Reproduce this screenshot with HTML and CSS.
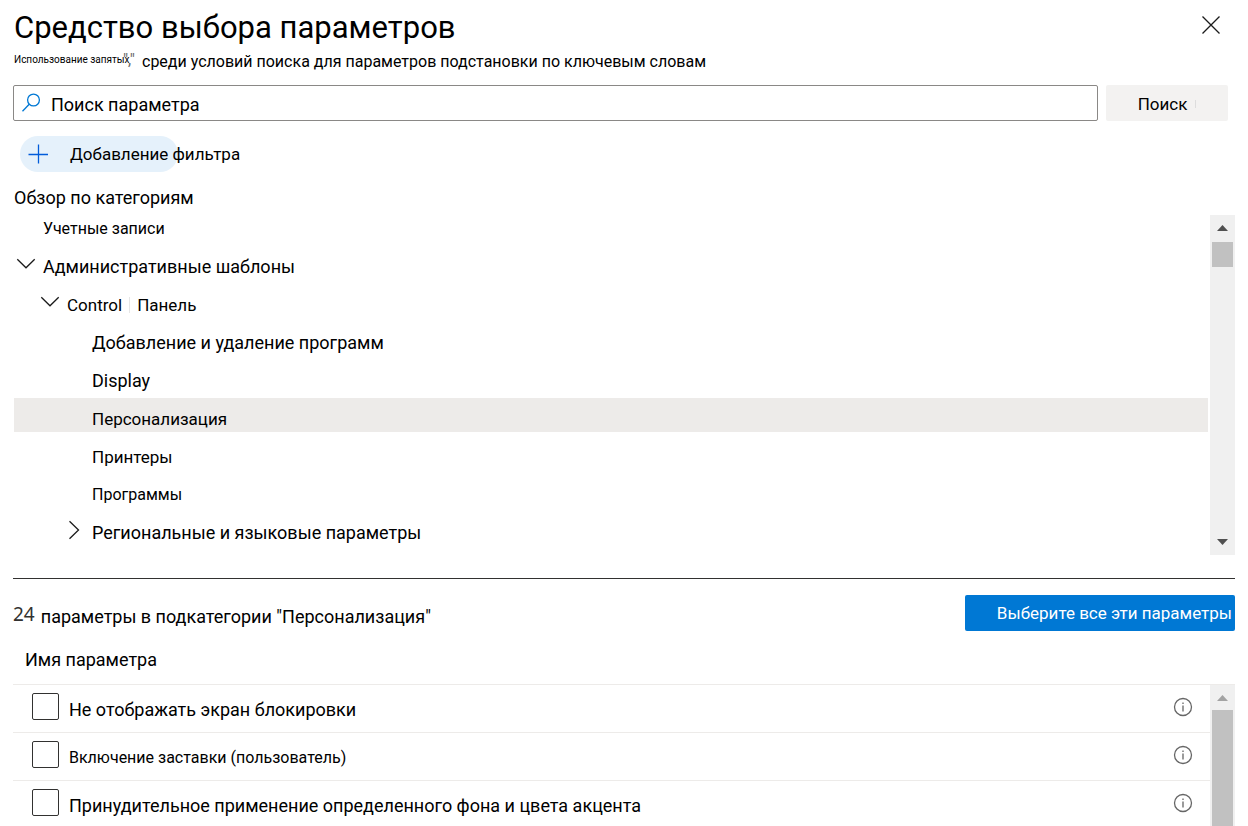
FILE: index.html
```html
<!DOCTYPE html>
<html lang="ru">
<head>
<meta charset="utf-8">
<title>Средство выбора параметров</title>
<link rel="stylesheet" href="styles.css">
</head>
<body>
<main class="picker">
  <header class="picker-head">
    <h1 class="title">Средство выбора параметров</h1>
    <button class="close" type="button" aria-label="Закрыть">
      <svg width="20" height="20" viewBox="0 0 20 20"><path d="M1.5 1.5l17 17M18.5 1.5l-17 17"/></svg>
    </button>
  </header>
  <p class="hint"><span class="hint-small">Использование запятых<span class="quote">","</span></span><span>среди условий поиска для параметров подстановки по ключевым словам</span></p>

  <form class="search">
    <label class="search-box">
      <svg class="search-icon" width="20" height="20" viewBox="0 0 20 20"><circle cx="11.500" cy="7" r="5.9"/><path d="M7.2 11.2L.5 18.2"/></svg>
      <input class="search-input" type="text" aria-label="Поиск параметра" placeholder="Поиск параметра">
    </label>
    <button class="search-button" type="submit">Поиск<span class="tick"></span></button>
  </form>

  <button class="add-filter" type="button">
    <svg width="20" height="20" viewBox="0 0 20 20"><path d="M10.500 .5v19M.5 10.500h19.500"/></svg>
    <span>Добавление фильтра</span>
  </button>

  <h2 class="browse">Обзор по категориям</h2>
  <section class="tree-pane">
    <ul class="tree">
      <li class="node level-1 clipped"><span class="text-16">Учетные записи</span></li>
      <li class="node level-1"><svg class="chevron" width="20" height="20" viewBox="0 0 20 20"><path d="M1.3 5.2L10 13.8l8.7-8.6"/></svg><span>Административные шаблоны</span></li>
      <li class="node level-2"><svg class="chevron" width="20" height="20" viewBox="0 0 20 20"><path d="M1.3 5.2L10 13.8l8.7-8.6"/></svg><span class="text-17">Control</span><span class="bar"></span><span class="text-17">Панель</span></li>
      <li class="node level-3"><span>Добавление и удаление программ</span></li>
      <li class="node level-3"><span>Display</span></li>
      <li class="node level-3 selected"><span class="text-17">Персонализация</span></li>
      <li class="node level-3"><span class="text-17">Принтеры</span></li>
      <li class="node level-3"><span class="text-16">Программы</span></li>
      <li class="node level-3"><svg class="chevron" width="20" height="20" viewBox="0 0 20 20"><path d="M4.500 1.3l9 8.7-9 8.7"/></svg><span>Региональные и языковые параметры</span></li>
    </ul>
    <div class="scroll">
      <svg class="arrow" width="25" height="27" viewBox="0 0 25 27"><path d="M7 16l5.500-6L18 16z"/></svg>
      <div class="thumb"></div>
      <svg class="arrow last" width="25" height="27" viewBox="0 0 25 27"><path d="M7 11l5.500 6L18 11z"/></svg>
    </div>
  </section>

  <section class="summary">
    <h2 class="count"><span class="number">24</span><span>параметры в подкатегории "Персонализация"</span></h2>
    <button class="select-all" type="button">Выберите все эти параметры</button>
  </section>

  <section class="settings">
    <table class="table">
      <thead><tr><th colspan="2" scope="col">Имя параметра</th></tr></thead>
      <tbody>
        <tr><td><label class="setting"><input class="check" type="checkbox"><span>Не отображать экран блокировки</span></label></td>
          <td class="info-cell"><button class="info" type="button" aria-label="Сведения"><svg width="20" height="20" viewBox="0 0 20 20"><circle cx="10" cy="10" r="8.500"/><path d="M10 8.500v6M10 5.500v1.500"/></svg></button></td></tr>
        <tr><td><label class="setting"><input class="check" type="checkbox"><span class="text-16">Включение заставки (пользователь)</span></label></td>
          <td class="info-cell"><button class="info" type="button" aria-label="Сведения"><svg width="20" height="20" viewBox="0 0 20 20"><circle cx="10" cy="10" r="8.500"/><path d="M10 8.500v6M10 5.500v1.500"/></svg></button></td></tr>
        <tr><td><label class="setting"><input class="check" type="checkbox"><span>Принудительное применение определенного фона и цвета акцента</span></label></td>
          <td class="info-cell"><button class="info" type="button" aria-label="Сведения"><svg width="20" height="20" viewBox="0 0 20 20"><circle cx="10" cy="10" r="8.500"/><path d="M10 8.500v6M10 5.500v1.500"/></svg></button></td></tr>
      </tbody>
    </table>
    <div class="scroll list-scroll">
      <svg class="arrow muted" width="25" height="25" viewBox="0 0 25 25"><path d="M7 16l5.500-6L18 16z"/></svg>
      <div class="thumb fill"></div>
    </div>
  </section>
</main>
</body>
</html>
```
FILE: styles.css
```css
* { box-sizing: border-box; }

body {
  margin: 0;
  height: 100vh;
  overflow: hidden;
  background: #fff;
  color: #000;
  font: 18px/24px Roboto, "Liberation Sans", sans-serif;
}

h1, h2, p, ul { margin: 0; padding: 0; font-weight: 400; }
button, input { font: inherit; color: inherit; }
button { border: 0; padding: 0; background: none; }
svg { display: block; flex: none; fill: none; stroke: #1b1b1b; stroke-width: 1.3; }

.picker { height: 100%; padding: 7px 13px 0; display: flex; flex-direction: column; }
.picker-head { display: flex; justify-content: space-between; align-items: flex-start; }
.title { padding-left: 1px; font-size: 31px; line-height: 42px; }
.close { margin: 8px 14px 0 0; }

.hint { display: flex; gap: 7px; padding: 1px 0 0 1px; font-size: 16px; line-height: 24px; }
.hint-small { position: relative; width: 121px; font-size: 10px; line-height: 20px; white-space: nowrap; }
.quote { position: absolute; right: 0; top: 0; color: #666; font-size: 16px; }

.search { display: flex; gap: 8px; margin: 11px 7px 0 0; }
.search-box { flex: 1; display: flex; align-items: center; gap: 9px; height: 36px; padding-left: 8px; border: 1px solid #8a8886; border-radius: 2px; }
.search-icon { stroke: #0078d4; }
.search-input { flex: 1; border: 0; outline: 0; padding: 4px 0 0; background: none; }
.search-input::placeholder { color: #000; opacity: 1; }
.search-button { display: flex; align-items: center; justify-content: center; gap: 8px; width: 122px; padding: 2px 0 0; border-radius: 2px; background: #f3f2f1; font-size: 17px; }
.tick { width: 1px; height: 8px; background: #ddd; }

.add-filter { display: flex; align-items: center; gap: 22px; width: 158px; height: 36px; margin: 15px 0 0 7px; padding-left: 8px; border-radius: 18px; background: #e5f1fb; font-size: 17px; white-space: nowrap; }
.add-filter svg { stroke: #015cda; }

.browse { margin-top: 14px; padding-left: 1px; font-size: 18px; line-height: 24px; }
.tree-pane { display: flex; gap: 2px; height: 340px; margin-top: 5px; padding-left: 1px; }
.tree { flex: 1; display: flex; flex-direction: column; gap: 4px; list-style: none; }
.node { display: flex; align-items: center; height: 34px; padding-top: 7px; }
.clipped { height: 27px; padding-top: 1px; }
.level-1 { padding-left: 29px; }
.level-2 { padding-left: 53px; }
.level-3 { padding-left: 78px; }
.chevron { margin: -5px 7px 0 -27px; }
.selected { background: #edebe9; }
.bar { width: 1px; height: 16px; margin: 0 7px; background: #e6e6e6; }
.text-17 { font-size: 17px; }
.text-16 { font-size: 16px; }

.scroll { display: flex; flex-direction: column; width: 25px; background: #f0f0f0; }
.arrow { fill: #505050; stroke: none; }
.muted { fill: #a3a3a3; }
.thumb { height: 25px; margin: 0 2px; background: #c1c1c1; }
.last { margin-top: auto; }
.fill { flex: 1; }

.summary { display: flex; justify-content: space-between; align-items: center; margin-top: 23px; padding-top: 16px; border-top: 1px solid #323130; }
.count { display: flex; gap: 6px; padding-top: 8px; font-size: 18px; line-height: 24px; }
.number { margin-top: -3px; color: #323130; font-family: "Noto Sans", sans-serif; font-size: 19px; }
.select-all { height: 36px; padding: 0 3px 0 32px; border-radius: 2px; background: #0078d4; color: #fff; font-size: 17px; }

.settings { flex: 1; min-height: 0; display: flex; align-items: stretch; }
.table { flex: 1; align-self: flex-start; border-collapse: collapse; }
.table th { height: 53px; padding: 6px 0 0 12px; font-weight: 400; text-align: left; }
.table td { height: 48px; padding: 0; border-top: 1px solid #edebe9; }
.setting { display: flex; align-items: center; gap: 10px; padding: 0 0 4px 19px; }
.setting span { padding-top: 7px; }
.check { appearance: none; width: 27px; height: 27px; margin: 0; border: 1px solid #323130; border-radius: 2px; background: #fff; }
.info-cell { width: 37px; }
.info { display: block; margin-bottom: 2px; }
.info svg { stroke: #666; }
.list-scroll { margin-top: 53px; border-top: 1px solid #edebe9; }
```
